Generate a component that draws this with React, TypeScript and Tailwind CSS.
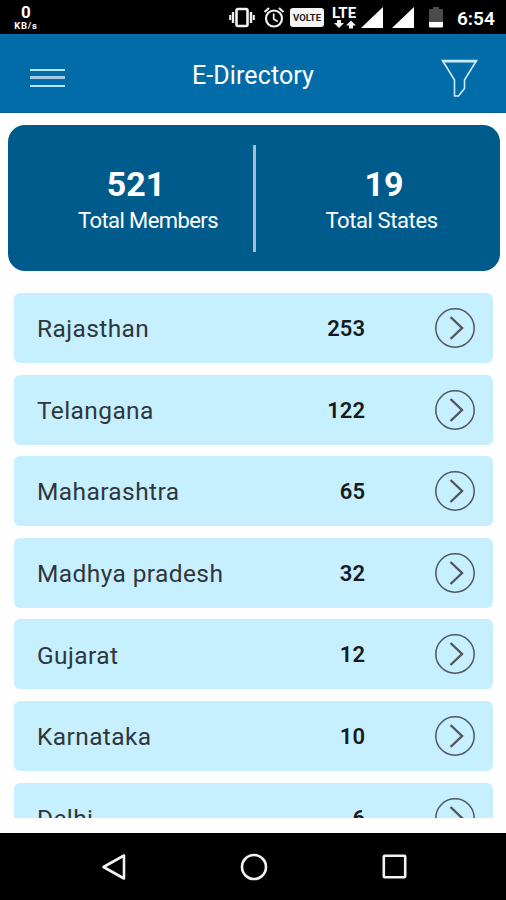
const states = [
  { name: "Rajasthan", members: 253 },
  { name: "Telangana", members: 122 },
  { name: "Maharashtra", members: 65 },
  { name: "Madhya pradesh", members: 32 },
  { name: "Gujarat", members: 12 },
  { name: "Karnataka", members: 10 },
  { name: "Delhi", members: 6 },
];

function SignalIcon() {
  return (
    <svg width="22" height="21" viewBox="0 0 22 21" fill="#fff">
      <path d="M22 0v21H0z" />
    </svg>
  );
}

function StatusBar() {
  return (
    <div className="h-[34px] shrink-0 bg-black text-white flex items-start">
      {/* Network speed */}
      <div className="w-[52px] pt-[4px] flex flex-col items-center font-bold">
        <span className="text-[17px] leading-[17px]">0</span>
        <span className="text-[9.5px] leading-[9px] tracking-[0.7px]">KB/s</span>
      </div>

      {/* Vibrate */}
      <svg className="ml-[177px] mt-[7px]" width="26" height="21" viewBox="0 0 26 21" fill="none" stroke="#f2f2f2" strokeWidth="2">
        <rect x="7.5" y="2" width="11" height="17" rx="1.5" strokeWidth="2.6" />
        <path d="M4 5v11M22 5v11" strokeWidth="2.4" />
        <path d="M1.2 8v5M24.8 8v5" />
      </svg>

      {/* Alarm */}
      <svg className="ml-2 mt-[7px]" width="22" height="21" viewBox="0 0 22 21" fill="none" stroke="#f2f2f2" strokeWidth="2">
        <circle cx="11" cy="11.5" r="8" strokeWidth="2.2" />
        <path d="M1.5 5 6 1M20.5 5 16 1" />
        <path d="M10.7 6.5v5.5l4 2.5" strokeWidth="1.7" />
      </svg>

      <div className="ml-[5px] mt-[8px] w-[34px] h-[19px] rounded-[3px] bg-[#f4f4f4] text-[#222] flex items-center justify-center">
        <span className="text-[9.5px] leading-none font-bold">VOLTE</span>
      </div>

      {/* Mobile data */}
      <div className="ml-[7px] mt-[7px] w-[26px] flex flex-col items-center">
        <span className="text-[15px] leading-[13px] font-bold">LTE</span>
        <svg className="ml-[2px]" width="22" height="9" viewBox="0 0 22 9" fill="#f2f2f2">
          <path d="M3 0h4v3h3L5 8 0 3h3zM15 8.500h4v-3h3l-5-5-5 5h3z" />
        </svg>
      </div>

      <div className="ml-[4px] mt-[7px] flex gap-[9px]">
        <SignalIcon />
        <SignalIcon />
      </div>

      {/* Battery */}
      <svg className="ml-[15px] mt-[7px]" width="14" height="21" viewBox="0 0 14 21">
        <path d="M4 0h6v2h3q1 0 1 1v12H0V3q0-1 1-1h3z" fill="#4b4b4b" />
        <path d="M0 15h14v4q0 1.5-1.5 1.5h-11Q0 20.5 0 19z" fill="#fff" />
      </svg>

      <span className="ml-[14px] mt-[7px] text-[19px] leading-6 font-semibold whitespace-nowrap">6:54</span>
    </div>
  );
}

function Header() {
  return (
    <header className="h-[79px] shrink-0 bg-[#026ca8] border-b border-[#0b609c] text-white flex items-center justify-between pl-[30px] pr-[28px]">
      <div className="w-[35px] mt-[9px] flex flex-col gap-[6px]">
        <div className="h-[2px] bg-[#b0e5ff]"></div>
        <div className="h-[3px] -my-[0.5px] bg-[#a9c9e8]"></div>
        <div className="h-[2px] bg-[#b0e5ff]"></div>
      </div>
      <h1 className="text-[25px] leading-8 mt-[6px] tracking-[0.1px]">E-Directory</h1>
      <svg className="mt-[10px]" width="37" height="39" viewBox="0 0 37 39" fill="none" stroke="#cde9fa" strokeWidth="1.6">
        <path d="M1.5 1.5h34L23.5 21v8.5l-6 7.5h-4V21z" />
        <path d="M1.5 2.3h34" strokeWidth="2.4" />
      </svg>
    </header>
  );
}

function Summary() {
  return (
    <section className="mt-[12px] ml-2 mr-[6px] h-[146px] shrink-0 rounded-[17px] bg-[#005b8d] text-white flex items-center">
      <div className="w-[245px] pl-[35px] flex flex-col items-center pt-[7px]">
        <span className="text-[34px] leading-[39px] font-bold mr-[24px]">521</span>
        <span className="text-[22px] leading-[34px] tracking-[-0.6px]">Total Members</span>
      </div>
      <div className="w-[3px] h-[107px] bg-[#a9bdce]"></div>
      <div className="flex-1 pl-[7px] flex flex-col items-center pt-[7px]">
        <span className="text-[34px] leading-[39px] font-bold ml-[5px]">19</span>
        <span className="text-[22px] leading-[34px] tracking-[-0.4px]">Total States</span>
      </div>
    </section>
  );
}

function StateRow({ name, members }: { name: string; members: number }) {
  return (
    <li className="h-[70px] shrink-0 rounded-[6px] bg-[#c6f0ff] flex items-center pl-[23px] pr-[18px]">
      <span className="flex-1 text-[24.5px] text-[#30363b] tracking-[0.4px] pt-[3px]">{name}</span>
      <span className="text-[22px] text-[#171b1e] font-semibold pt-[1px]">{members}</span>
      <svg className="ml-[70px]" width="40" height="40" viewBox="0 0 40 40" fill="none" stroke="#50575b">
        <circle cx="20" cy="20" r="19.2" strokeWidth="1.5" />
        <path d="m15.5 9 11.5 11-11.5 11" strokeWidth="2.4" />
      </svg>
    </li>
  );
}

function NavBar() {
  return (
    <nav className="h-[67px] shrink-0 bg-black flex items-center justify-between pl-[102px] pr-[99px]">
      <svg width="24" height="28" viewBox="0 0 24 28" fill="none" stroke="#f2f2f2" strokeWidth="2.6" strokeLinejoin="round">
        <path d="M22 2.5v23L1.5 14z" />
      </svg>
      <svg width="28" height="28" viewBox="0 0 28 28" fill="none" stroke="#f2f2f2" strokeWidth="2.6">
        <circle cx="14" cy="14" r="12" />
      </svg>
      <svg width="25" height="25" viewBox="0 0 25 25" fill="none" stroke="#f2f2f2" strokeWidth="2.6">
        <rect x="1.8" y="1.8" width="21.4" height="21.4" rx="1" />
      </svg>
    </nav>
  );
}

export default function App() {
  return (
    <div className="w-[506px] h-[900px] overflow-hidden bg-[#fefefe] font-[Roboto,sans-serif] flex flex-col">
      <StatusBar />
      <Header />
      <Summary />
      <ul className="mt-[22px] mb-[15px] ml-[14px] mr-[13px] flex-1 min-h-0 overflow-hidden flex flex-col gap-[11.6px]">
        {states.map((state) => (
          <StateRow key={state.name} name={state.name} members={state.members} />
        ))}
      </ul>
      <NavBar />
    </div>
  );
}
